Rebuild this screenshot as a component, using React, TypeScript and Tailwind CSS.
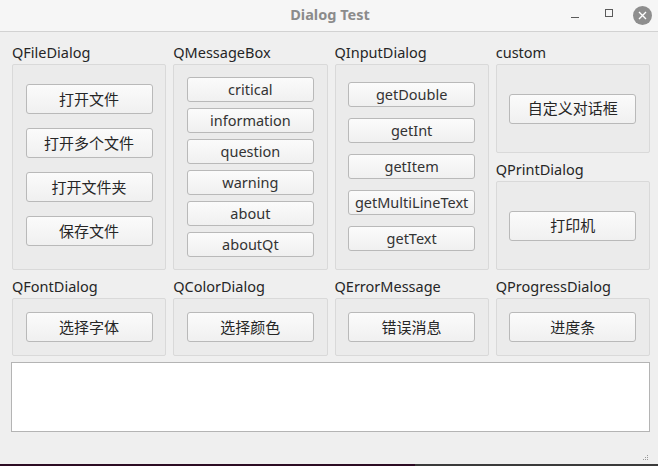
import React from "react";

const FONT = "font-['Noto_Sans','Noto_Sans_CJK_SC',sans-serif]";

const Btn: React.FC<{ label: string; tall?: boolean; cjk?: boolean }> = ({ label, tall = true, cjk = false }) => (
  <button
    className={`w-[127px] ${tall ? "h-[30px]" : "h-[25px]"} ${cjk ? "text-[15px] text-[#262626]" : "text-[14.5px] text-[#333333]"} flex items-center justify-center rounded-[3px] border border-[#b9b9b9] bg-gradient-to-b from-[#fbfbfb] to-[#f0f0f0] leading-none`}
  >
    {label}
  </button>
);

const Group: React.FC<{
  title: string;
  boxClass: string;
  children: React.ReactNode;
}> = ({ title, boxClass, children }) => (
  <div className="flex flex-col">
    <div className="h-[19px] leading-[15px] text-[14.5px] text-[#262626] whitespace-nowrap">{title}</div>
    <div className={`rounded-[2px] border border-[#d9d9d9] bg-[#ebebeb] flex flex-col items-center ${boxClass}`}>
      {children}
    </div>
  </div>
);

export default function App() {
  return (
    <div className={`w-[658px] h-[466px] bg-[#efefef] flex flex-col ${FONT}`}>
      {/* title bar */}
      <div className="h-[32px] shrink-0 bg-[#f6f6f6] border-b border-[#d2d2d2] flex items-center relative">
        <div className="flex-1 text-center text-[14.5px] font-bold text-[#8b8b8b] pl-[2px] pb-[2px]">Dialog Test</div>
        <div className="absolute right-[6px] top-0 h-[31px] flex items-center">
          <div className="w-[8px] h-px bg-[#5a5a5a] mt-[3px] mr-[26px]" />
          <div className="w-[8px] h-[8px] border border-[#5a5a5a] mb-[6px] mr-[20px]" />
          <div className="w-[19px] h-[19px] rounded-full bg-[#8e8e8e] flex items-center justify-center">
            <svg width="9" height="9" viewBox="0 0 9 9">
              <path d="M1 1 L8 8 M8 1 L1 8" stroke="#ffffff" strokeWidth="1.4" />
            </svg>
          </div>
        </div>
      </div>

      {/* content */}
      <div className="flex-1 flex flex-col pl-[12px] pr-[8px] pt-[13px]">
        <div className="grid grid-cols-4 gap-x-[7px]">
          <Group title="QFileDialog" boxClass="h-[206px] pt-[19px] gap-[14px]">
            <Btn label="打开文件" cjk />
            <Btn label="打开多个文件" cjk />
            <Btn label="打开文件夹" cjk />
            <Btn label="保存文件" cjk />
          </Group>
          <Group title="QMessageBox" boxClass="h-[206px] pt-[12px] gap-[6px]">
            <Btn label="critical" tall={false} />
            <Btn label="information" tall={false} />
            <Btn label="question" tall={false} />
            <Btn label="warning" tall={false} />
            <Btn label="about" tall={false} />
            <Btn label="aboutQt" tall={false} />
          </Group>
          <Group title="QInputDialog" boxClass="h-[206px] pt-[17px] gap-[11px]">
            <Btn label="getDouble" tall={false} />
            <Btn label="getInt" tall={false} />
            <Btn label="getItem" tall={false} />
            <Btn label="getMultiLineText" tall={false} />
            <Btn label="getText" tall={false} />
          </Group>
          <div className="flex flex-col">
            <Group title="custom" boxClass="h-[89px] justify-center">
              <Btn label="自定义对话框" cjk />
            </Group>
            <div className="mt-[9px]">
              <Group title="QPrintDialog" boxClass="h-[89px] justify-center">
                <Btn label="打印机" cjk />
              </Group>
            </div>
          </div>
        </div>

        <div className="grid grid-cols-4 gap-x-[7px] mt-[9px]">
          <Group title="QFontDialog" boxClass="h-[58px] justify-center">
            <Btn label="选择字体" cjk />
          </Group>
          <Group title="QColorDialog" boxClass="h-[58px] justify-center">
            <Btn label="选择颜色" cjk />
          </Group>
          <Group title="QErrorMessage" boxClass="h-[58px] justify-center">
            <Btn label="错误消息" cjk />
          </Group>
          <Group title="QProgressDialog" boxClass="h-[58px] justify-center">
            <Btn label="进度条" cjk />
          </Group>
        </div>

        <div className="mt-[6px] ml-[-1px] h-[70px] bg-white border border-[#b4b4b4]" />

        <div className="flex-1 flex justify-end items-end pb-[3px] pr-[1px]">
          <svg width="6" height="6" viewBox="0 0 6 6">
            <rect x="4" y="0" width="1" height="1" fill="#9a9a9a" />
            <rect x="2" y="2" width="1" height="1" fill="#9a9a9a" />
            <rect x="4" y="2" width="1" height="1" fill="#9a9a9a" />
            <rect x="0" y="4" width="1" height="1" fill="#9a9a9a" />
            <rect x="2" y="4" width="1" height="1" fill="#9a9a9a" />
            <rect x="4" y="4" width="1" height="1" fill="#9a9a9a" />
          </svg>
        </div>
      </div>

      {/* desktop strip below window */}
      <div className="h-[2px] shrink-0 flex">
        <div className="w-[415px] bg-[#2c0b23]" />
        <div className="flex-1 bg-[#3a3a3a]" />
      </div>
    </div>
  );
}
